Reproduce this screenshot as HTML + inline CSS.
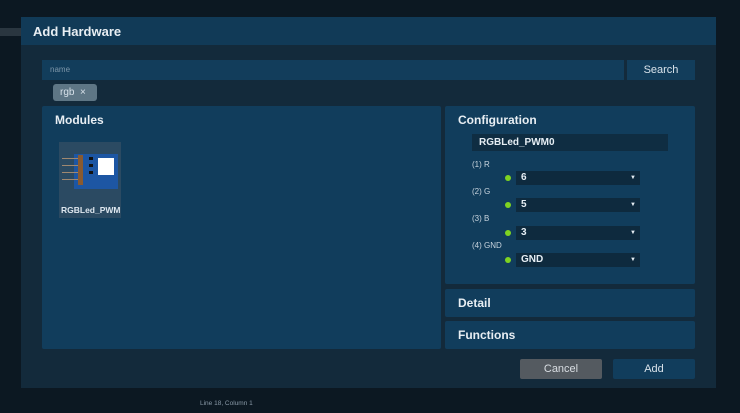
<!DOCTYPE html><html><head><style>
*{margin:0;padding:0;box-sizing:border-box}
body{width:740px;height:413px;background:#0c1822;font-family:"Liberation Sans",sans-serif;position:relative;overflow:hidden;color:#e6eef4}
.a{position:absolute}
.p{background:#113d5c;border-radius:2px}
.h{font-size:12px;font-weight:bold;color:#e8eef3}
.sel{position:absolute;left:516px;width:124px;height:14px;background:#0e2a3e;font-size:10px;font-weight:bold;padding-left:5px;line-height:14px}
.sel:after{content:"▼";position:absolute;right:4px;font-size:6px}
.dot{position:absolute;left:505px;width:6px;height:6px;border-radius:3px;background:#7ed321}
.lb{position:absolute;left:472px;font-size:8px;color:#c8d4de}
</style></head><body>
<div class="a" style="left:0;top:28px;width:21px;height:8px;background:#2a3640"></div>
<div class="a" style="left:21px;top:17px;width:695px;height:371px;background:#132a3b"></div>
<div class="a" style="left:21px;top:17px;width:695px;height:28px;background:#113a57"></div>
<div class="a h" style="left:33px;top:24px;font-size:13px">Add Hardware</div>
<div class="a" style="left:42px;top:60px;width:582px;height:20px;background:#123d5b;font-size:8px;color:#7c95a8;padding:5px 8px">name</div>
<div class="a" style="left:627px;top:60px;width:68px;height:20px;background:#123d5b;font-size:11px;text-align:center;line-height:20px;color:#d8e2ea">Search</div>
<div class="a" style="left:53px;top:84px;width:44px;height:17px;background:#5e7685;border-radius:3px;font-size:10px;color:#d8e2ea;line-height:17px;padding-left:7px">rgb &nbsp;×</div>
<div class="a p" style="left:42px;top:106px;width:399px;height:243px"></div>
<div class="a h" style="left:55px;top:113px">Modules</div>
<div class="a" style="left:59px;top:142px;width:62px;height:76px;background:#2b4a62"></div>
<div class="a" style="left:74px;top:154px;width:44px;height:35px;background:#1d56a3"></div>
<div class="a" style="left:98px;top:158px;width:16px;height:17px;background:#fff"></div>
<div class="a" style="left:62px;top:158px;width:18px;height:1px;background:#a08870;box-shadow:0 7px #a08870,0 14px #a08870,0 21px #a08870"></div>
<div class="a" style="left:78px;top:155px;width:5px;height:30px;background:#8a5a30"></div>
<div class="a" style="left:89px;top:157px;width:4px;height:3px;background:#111;box-shadow:0 7px #111,0 14px #111"></div>
<div class="a" style="left:61px;top:205px;font-size:8.5px;font-weight:bold;color:#dde6ee">RGBLed_PWM</div>
<div class="a p" style="left:445px;top:106px;width:250px;height:178px"></div>
<div class="a h" style="left:458px;top:113px">Configuration</div>
<div class="a" style="left:472px;top:134px;width:196px;height:17px;background:#0f2d42;font-size:10px;font-weight:bold;line-height:17px;padding-left:7px">RGBLed_PWM0</div>
<div class="lb" style="top:160px">(1) R</div><div class="dot" style="top:175px"></div><div class="sel" style="top:171px">6</div>
<div class="lb" style="top:187px">(2) G</div><div class="dot" style="top:202px"></div><div class="sel" style="top:198px">5</div>
<div class="lb" style="top:214px">(3) B</div><div class="dot" style="top:230px"></div><div class="sel" style="top:226px">3</div>
<div class="lb" style="top:241px">(4) GND</div><div class="dot" style="top:257px"></div><div class="sel" style="top:253px">GND</div>
<div class="a p" style="left:445px;top:289px;width:250px;height:28px"></div>
<div class="a h" style="left:458px;top:296px">Detail</div>
<div class="a p" style="left:445px;top:321px;width:250px;height:28px"></div>
<div class="a h" style="left:458px;top:328px">Functions</div>
<div class="a" style="left:520px;top:359px;width:82px;height:20px;background:#545a60;border-radius:2px;font-size:11px;text-align:center;line-height:20px;color:#d8dde2">Cancel</div>
<div class="a" style="left:613px;top:359px;width:82px;height:20px;background:#113d5c;border-radius:2px;font-size:11px;text-align:center;line-height:20px;color:#d8e2ea">Add</div>
<div class="a" style="left:200px;top:400px;font-size:6.5px;color:#8898a6">Line 18, Column 1</div>
</body></html>
